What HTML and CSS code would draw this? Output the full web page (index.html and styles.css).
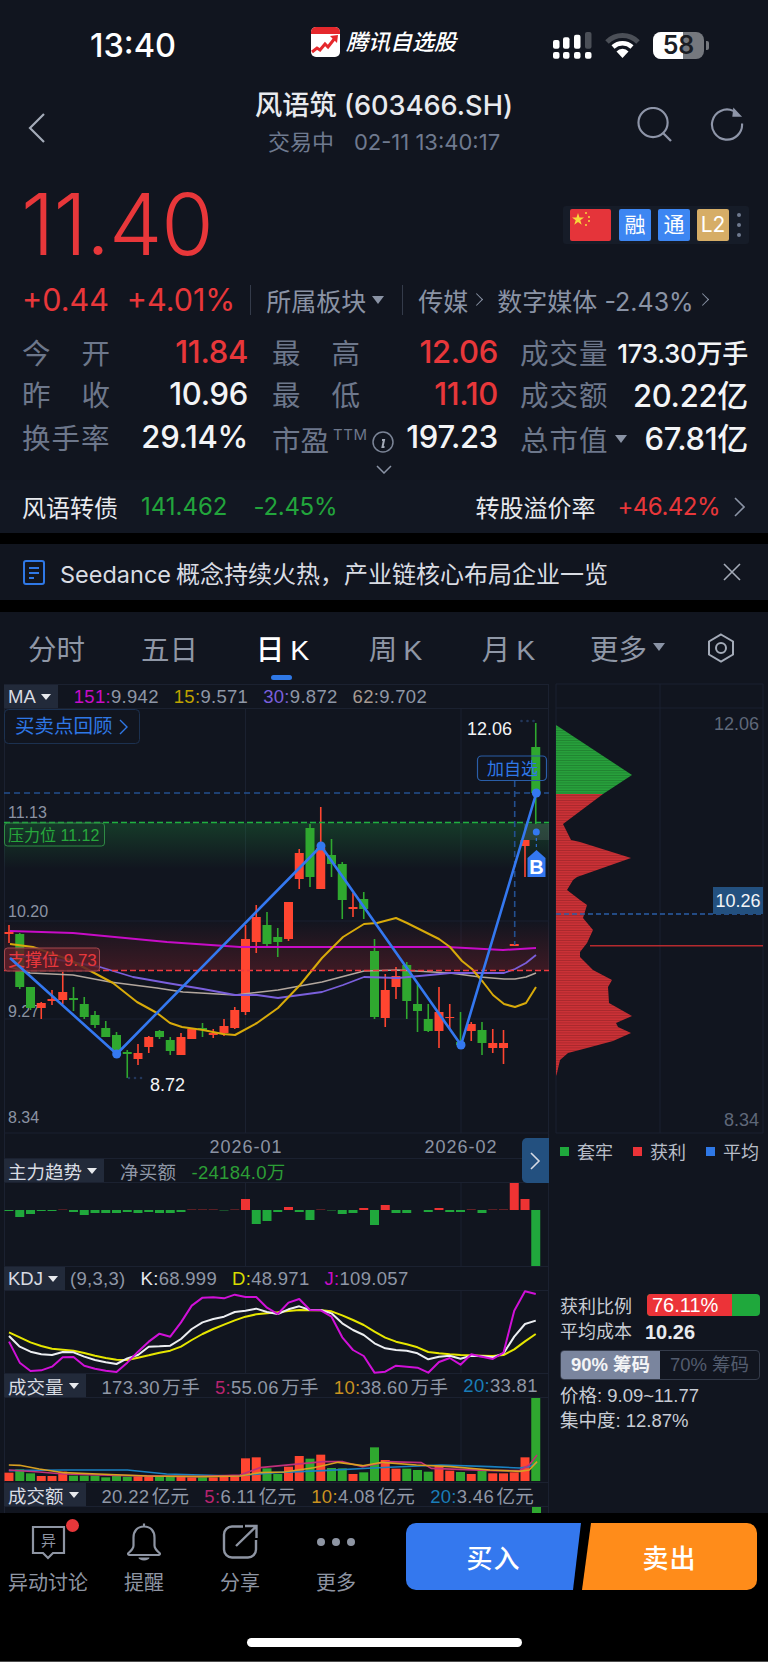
FILE: index.html
```html
<!DOCTYPE html>
<html lang="zh-CN">
<head>
    <meta charset="UTF-8">
    <meta name="viewport" content="width=device-width, initial-scale=1.0">
    <title>风语筑 (603466.SH)</title>
    <link rel="stylesheet" href="styles.css">
</head>
<body>
    <div class="top">
        <div class="statusbar">
            <span class="clock">13:40</span>
            <div class="app-name">
                <svg class="app-icon" viewBox="0 0 29 30">
                    <rect width="29" height="30" rx="5" fill="#fff"/>
                    <path d="M0 7V5a5 5 0 0 1 5-5h19a5 5 0 0 1 5 5v2z" fill="#e5282c"/>
                    <path d="M1 25l5-4 3 2 5-6 3 3 7-9" fill="none" stroke="#e5282c" stroke-width="3"/>
                    <path d="M19 9l8-1-1 8z" fill="#e5282c"/>
                </svg>
                <span class="app-title">腾讯自选股</span>
            </div>
            <div class="status-icons">
                <svg class="signal" viewBox="0 0 40 27">
                    <g fill="#fff">
                        <rect x="0" y="8" width="6.5" height="8.700" rx="2"/>
                        <rect x="10" y="5.300" width="6.500" height="11.400" rx="2"/>
                        <rect x="21" y="2.700" width="6.500" height="14" rx="2"/>
                        <rect x="32" y="0" width="6.500" height="16.700" rx="2" fill="#4b4f57"/>
                        <rect x="0" y="20" width="6.500" height="6.700" rx="2"/>
                        <rect x="10" y="20" width="6.500" height="6.700" rx="2"/>
                        <rect x="21" y="20" width="6.500" height="6.700" rx="2"/>
                        <rect x="32" y="20" width="6.500" height="6.700" rx="2"/>
                    </g>
                </svg>
                <svg class="wifi" viewBox="0 0 35 26">
                    <path d="M2 10a22 22 0 0 1 31 0" fill="none" stroke="#4b4f57" stroke-width="5"/>
                    <path d="M8 15a14 14 0 0 1 19 0" fill="none" stroke="#fff" stroke-width="4.5"/>
                    <path d="M17.500 26l-6-6.500a8 8 0 0 1 12 0z" fill="#fff"/>
                </svg>
                <div class="battery">
                    <div class="battery-body"><div class="battery-fill"></div><span>58</span></div>
                    <div class="battery-tip"></div>
                </div>
            </div>
        </div>

        <div class="nav">
            <svg class="back" viewBox="0 0 18 30"><path d="M16 1L2 15l14 14" fill="none" stroke="#a4abb8" stroke-width="2.200"/></svg>
            <div class="nav-title">
                <h1>风语筑 (603466.SH)</h1>
                <p><span>交易中</span>02-11 13:40:17</p>
            </div>
            <div class="nav-icons">
                <svg class="nav-icon" viewBox="0 0 36 36">
                    <circle cx="16.500" cy="16" r="15" fill="none" stroke="#8e95a8" stroke-width="2.200"/>
                    <path d="M27 27l8 8" fill="none" stroke="#8e95a8" stroke-width="2.400"/>
                </svg>
                <svg class="nav-icon" viewBox="0 0 36 36">
                    <path d="M25 4a15.500 15.500 0 1 0 9 13" fill="none" stroke="#8e95a8" stroke-width="2.200"/>
                    <path d="M25 .5l9 9.500h-10z" fill="#8e95a8"/>
                </svg>
            </div>
        </div>

        <div class="price-row">
            <div class="price">11.40</div>
            <div class="badges">
                <svg class="flag" viewBox="0 0 41 32">
                    <rect width="41" height="32" rx="2" fill="#e5343a"/>
                    <path d="M8 4l1.500 4.500h4.500l-3.700 2.700 1.400 4.500L8 13l-3.700 2.700 1.400-4.500L2 8.500h4.500z" fill="#f7d83a"/>
                    <circle cx="16" cy="4" r="1" fill="#f7d83a"/>
                    <circle cx="19" cy="8" r="1" fill="#f7d83a"/>
                    <circle cx="19" cy="12" r="1" fill="#f7d83a"/>
                    <circle cx="16" cy="16" r="1" fill="#f7d83a"/>
                </svg>
                <span class="badge badge-blue">融</span>
                <span class="badge badge-blue">通</span>
                <span class="badge badge-gold">L2</span>
                <span class="badge-more"><i></i><i></i><i></i></span>
            </div>
        </div>

        <div class="change-row">
            <span class="change first">+0.44</span>
            <span class="change second">+4.01%</span>
            <span class="sep"></span>
            <span class="sector sector-menu">所属板块<i class="tri"></i></span>
            <span class="sep"></span>
            <span class="sector">传媒<i class="chev"></i></span>
            <span class="sector">数字媒体 -2.43%<i class="chev"></i></span>
        </div>

        <div class="stats">
            <div class="stat"><span class="lbl spread"><i>今</i><i>开</i></span><b class="up">11.84</b></div>
            <div class="stat"><span class="lbl spread"><i>最</i><i>高</i></span><b class="up">12.06</b></div>
            <div class="stat"><span class="lbl">成交量</span><b class="small">173.30万手</b></div>

            <div class="stat"><span class="lbl spread"><i>昨</i><i>收</i></span><b>10.96</b></div>
            <div class="stat"><span class="lbl spread"><i>最</i><i>低</i></span><b class="up">11.10</b></div>
            <div class="stat"><span class="lbl">成交额</span><b>20.22亿</b></div>

            <div class="stat"><span class="lbl">换手率</span><b>29.14%</b></div>
            <div class="stat">
                <span class="lbl lower pe">市盈<sup>TTM</sup></span>
                <svg class="info" viewBox="0 0 22 22">
                    <circle cx="11" cy="11" r="10" fill="none" stroke="#7b8496" stroke-width="1.500"/>
                    <path d="M11.500 5.500h.01M10 9h2l-1.500 7h2" fill="none" stroke="#a4abb8" stroke-width="2"/>
                </svg>
                <b>197.23</b>
            </div>
            <div class="stat"><span class="lbl lower">总市值</span><i class="tri tri-cap"></i><b>67.81亿</b></div>
        </div>
        <svg class="expand" viewBox="0 0 16 9"><path d="M1 1l7 7 7-7" fill="none" stroke="#8a93a5" stroke-width="1.500"/></svg>

        <div class="bond">
            <span class="bond-name">风语转债</span>
            <span class="down bond-price">141.462</span>
            <span class="down bond-pct">-2.45%</span>
            <span class="bond-label">转股溢价率</span>
            <span class="up bond-rate">+46.42%</span>
            <svg class="bond-chev" viewBox="0 0 11 20"><path d="M1 1l9 9-9 9" fill="none" stroke="#8a93a5" stroke-width="1.600"/></svg>
        </div>
    </div>

    <div class="banner">
        <svg class="banner-icon" viewBox="0 0 22 25">
            <rect x="1" y="1" width="20" height="23" rx="2" fill="none" stroke="#2f78e6" stroke-width="2"/>
            <path d="M6 8h10M6 13h10M6 18h5" fill="none" stroke="#2f78e6" stroke-width="2"/>
        </svg>
        <span class="banner-text"><span class="banner-latin">Seedance</span>概念持续火热，产业链核心布局企业一览</span>
        <svg class="banner-close" viewBox="0 0 18 18"><path d="M1 1l16 16M17 1L1 17" fill="none" stroke="#a4abb8" stroke-width="1.600"/></svg>
    </div>

    <div class="tabs">
        <span class="tab">分时</span>
        <span class="tab">五日</span>
        <span class="tab active">日<em>K</em></span>
        <span class="tab">周<em>K</em></span>
        <span class="tab">月<em>K</em></span>
        <span class="tab more">更多<i class="tri tri-tab"></i></span>
        <svg class="tab-gear" viewBox="0 0 28 30">
            <path d="M14 1.500l12 7v13l-12 7-12-7v-13z" fill="none" stroke="#a4abb8" stroke-width="2"/>
            <circle cx="14" cy="15" r="5" fill="none" stroke="#a4abb8" stroke-width="2"/>
        </svg>
    </div>

    <div class="chart">
        <div class="chart-left">
            <div class="ind-row">
                <span class="ind-btn">MA<i class="tri tri-btn"></i></span>
                <span><u class="c-mag">151:</u>9.942</span>
                <span><u class="c-gold">15:</u>9.571</span>
                <span><u class="c-pur">30:</u>9.872</span>
                <span><u class="c-tan">62:</u>9.702</span>
            </div>
            <svg id="main-plot" class="plot plot-main" viewBox="4 709 545 449"></svg>
            <button class="collapse"><svg viewBox="0 0 11 18"><path d="M1 1l8 8-8 8" fill="none" stroke="#d5dae4" stroke-width="1.600"/></svg></button>

            <div class="ind-row">
                <span class="ind-btn">主力趋势<i class="tri tri-btn"></i></span>
                <span>净买额</span>
                <span class="c-green">-24184.0万</span>
            </div>
            <svg id="flow-plot" class="plot plot-flow" viewBox="4 1183 545 83"></svg>

            <div class="ind-row">
                <span class="ind-btn">KDJ<i class="tri tri-btn"></i></span>
                <span class="kdj-params">(9,3,3)</span>
                <span><u class="c-white">K:</u>68.999</span>
                <span><u class="c-lime">D:</u>48.971</span>
                <span><u class="c-mag">J:</u>109.057</span>
            </div>
            <svg id="kdj-plot" class="plot plot-kdj" viewBox="4 1291 545 82"></svg>

            <div class="ind-row">
                <span class="ind-btn">成交量<i class="tri tri-btn"></i></span>
                <span>173.30 万手</span>
                <span><u class="c-rose">5:</u>55.06 万手</span>
                <span><u class="c-amber">10:</u>38.60 万手</span>
                <span><u class="c-sky">20:</u>33.81</span>
            </div>
            <svg id="vol-plot" class="plot plot-vol" viewBox="4 1398 545 84"></svg>

            <div class="ind-row">
                <span class="ind-btn">成交额<i class="tri tri-btn"></i></span>
                <span>20.22 亿元</span>
                <span><u class="c-rose">5:</u>6.11 亿元</span>
                <span><u class="c-amber">10:</u>4.08 亿元</span>
                <span><u class="c-sky">20:</u>3.46 亿元</span>
            </div>
            <div class="amt-plot"><div class="amt-bar"></div></div>
        </div>

        <div class="chart-right">
            <svg id="chip-plot" class="plot plot-chip" viewBox="556 684 212 449"></svg>
            <div class="legend">
                <span><i class="sq sq-green"></i>套牢</span>
                <span><i class="sq sq-red"></i>获利</span>
                <span><i class="sq sq-blue"></i>平均</span>
            </div>
            <div class="ratio">
                <span>获利比例</span>
                <div class="ratio-bar"><div class="ratio-fill">76.11%</div></div>
            </div>
            <div class="avg-cost"><span>平均成本</span><b>10.26</b></div>
            <div class="seg">
                <span class="seg-item on">90% 筹码</span>
                <span class="seg-item">70% 筹码</span>
            </div>
            <p class="chip-line">价格: 9.09~11.77</p>
            <p class="chip-line">集中度: 12.87%</p>
        </div>
    </div>

    <div class="bottom">
        <div class="tools">
            <div class="tool">
                <div class="tool-icon">
                    <svg viewBox="0 0 36 36">
                        <path d="M3 4h31v26H23l-5 5-5-5H3z" fill="none" stroke="#8e95a3" stroke-width="2.200"/>
                        <text class="tool-glyph" x="18.500" y="23" text-anchor="middle">异</text>
                    </svg>
                    <span class="dot"></span>
                </div>
                <span>异动讨论</span>
            </div>
            <div class="tool">
                <div class="tool-icon">
                    <svg viewBox="0 0 36 36">
                        <path d="M18 .5v3M18 3.500c-7 0-10.500 5-10.500 11v8c0 3-2 5-5 7.500-1 1 0 2 1 2h29c1 0 2-1 1-2-3-2.500-5-4.500-5-7.500v-8c0-6-3.500-11-10.500-11z" fill="none" stroke="#8e95a3" stroke-width="2.200"/>
                        <path d="M12.500 34.500h11a5.500 3 0 0 1-11 0z" fill="#8e95a3"/>
                    </svg>
                </div>
                <span>提醒</span>
            </div>
            <div class="tool">
                <div class="tool-icon">
                    <svg viewBox="0 0 36 36">
                        <path d="M21 3.500H10a8 8 0 0 0-8 8v15a8 8 0 0 0 8 8h16a8 8 0 0 0 8-8V17" fill="none" stroke="#8e95a3" stroke-width="2.400"/>
                        <path d="M14 23L34 3.500M23 3h11.500v12" fill="none" stroke="#8e95a3" stroke-width="2.400"/>
                    </svg>
                </div>
                <span>分享</span>
            </div>
            <div class="tool">
                <div class="tool-icon dots"><i></i><i></i><i></i></div>
                <span>更多</span>
            </div>
        </div>
        <div class="trade">
            <button class="trade-btn buy">买入</button>
            <button class="trade-btn sell">卖出</button>
        </div>
        <div class="home-bar"></div>
    </div>

    <script src="chart.js"></script>
</body>
</html>
```

FILE: styles.css
```css
* {
    margin: 0;
    padding: 0;
    box-sizing: border-box;
}

body {
    width: 768px;
    height: 1662px;
    overflow: hidden;
    background: #000;
    color: #e8eaee;
    font-family: Inter, "Noto Sans CJK SC", sans-serif;
}

i, em, u {
    font-style: normal;
    text-decoration: none;
}

.up { color: #e8373a; }
.down { color: #22a53c; }

/* triangles and chevrons shared by the rows */
.tri {
    display: inline-block;
    width: 0;
    height: 0;
    border-left: 6px solid transparent;
    border-right: 6px solid transparent;
    border-top: 8px solid #8a93a5;
}

.chev {
    display: inline-block;
    width: 9px;
    height: 9px;
    margin-left: 7px;
    border-top: 1.5px solid #8a93a5;
    border-right: 1.5px solid #8a93a5;
    transform: rotate(45deg) translate(-2px, 2px);
}

/* top section */
.top {
    height: 533px;
    background: #11151f;
    position: relative;
}

.statusbar {
    height: 88px;
    display: grid;
    grid-template-columns: 311px 242px 1fr;
    padding-top: 27px;
}

.clock {
    padding-left: 90px;
    font-size: 32.500px;
    font-weight: 500;
    line-height: 38px;
    color: #fff;
}

.app-name {
    display: flex;
    align-items: flex-start;
    gap: 6px;
}

.app-icon {
    width: 29px;
    height: 30px;
}

.app-title {
    font-size: 22px;
    font-weight: 500;
    font-style: italic;
    line-height: 30px;
    color: #fff;
}

.status-icons {
    display: flex;
    align-items: flex-start;
    padding-top: 5px;
    gap: 12px;
}

.signal {
    width: 40px;
    height: 27px;
}

.wifi {
    width: 35px;
    height: 26px;
}

.battery {
    display: flex;
    align-items: center;
    gap: 2px;
    margin-left: 1px;
}

.battery-body {
    width: 51px;
    height: 27px;
    border-radius: 8px;
    background: #75787e;
    position: relative;
    overflow: hidden;
    text-align: center;
    font-size: 25px;
    font-weight: 600;
    line-height: 27px;
    color: #1a1d24;
}

.battery-fill {
    position: absolute;
    left: 0;
    top: 0;
    bottom: 0;
    width: 30px;
    background: #fff;
}

.battery-body span {
    position: relative;
}

.battery-tip {
    width: 3px;
    height: 9px;
    border-radius: 0 2px 2px 0;
    background: #75787e;
}

.nav {
    height: 77px;
    display: grid;
    grid-template-columns: 1fr auto 1fr;
    align-items: start;
}

.back {
    width: 18px;
    height: 30px;
    margin: 25px 0 0 28px;
}

.nav-title {
    text-align: center;
}

.nav-title h1 {
    font-size: 27.200px;
    font-weight: 500;
    line-height: 36px;
    white-space: nowrap;
}

.nav-title p {
    font-size: 22px;
    line-height: 36px;
    color: #6f7a8f;
}

.nav-title p span {
    margin-right: 20px;
}

.nav-icons {
    display: flex;
    justify-content: flex-end;
    gap: 37px;
    padding: 19px 24px 0 0;
}

.nav-icon {
    width: 35px;
    height: 35px;
}

.price-row {
    height: 111px;
    padding: 0 19px 0 21px;
    display: flex;
    justify-content: space-between;
    align-items: flex-start;
}

.price {
    padding-top: 10px;
    font-size: 85px;
    font-weight: 300;
    line-height: 100px;
    letter-spacing: -1px;
    color: #e8373a;
}

.badges {
    display: flex;
    align-items: center;
    gap: 7px;
    margin-top: 41px;
    padding: 3px 8px 3px 7px;
    background: #161c28;
    border-radius: 3px;
}

.flag {
    width: 41px;
    height: 32px;
    margin-right: 1px;
}

.badge {
    width: 32px;
    height: 32px;
    border-radius: 2px;
    text-align: center;
    font-size: 21px;
    line-height: 32px;
    color: #fff;
}

.badge-blue { background: #3d86f2; }
.badge-gold { background: #d6ad66; }

.badge-more {
    display: flex;
    flex-direction: column;
    gap: 6px;
    margin-left: 1px;
}

.badge-more i {
    width: 4px;
    height: 4px;
    border-radius: 50%;
    background: #6f7a8f;
}

.change-row {
    height: 47px;
    margin-bottom: 7px;
    padding-left: 22px;
    display: flex;
    align-items: center;
    font-size: 25px;
    color: #8a93a5;
}

.change {
    font-size: 30.500px;
    font-weight: 400;
    color: #e8373a;
}

.second {
    margin-left: 18px;
}

.sep {
    width: 1px;
    height: 30px;
    background: #343b4a;
    margin: 0 15px;
}

.sector {
    display: flex;
    align-items: center;
    margin-right: 13px;
}

.sector-menu {
    margin-right: 3px;
}

.sector .tri {
    margin-left: 6px;
}

.stats {
    margin-top: 0;
    padding-left: 22px;
    display: grid;
    grid-template-columns: 226px 226px 226px;
    column-gap: 24px;
    grid-auto-rows: 42.500px;
}

.stat:nth-child(3n) {
    margin-left: -2px;
}

.stat {
    display: flex;
    align-items: center;
}

.stat b {
    margin-left: auto;
    font-size: 31px;
    font-weight: 500;
    letter-spacing: -0.300px;
    color: #f3f4f6;
}

.stat b.up { color: #e8373a; }
.stat b.small { font-size: 26px; }

.lbl {
    width: 89px;
    font-size: 28.500px;
    letter-spacing: 1px;
    white-space: nowrap;
    color: #6d778b;
}

.spread {
    display: flex;
    justify-content: space-between;
}

.lower {
    padding-top: 5px;
}

.pe {
    width: 100px;
    letter-spacing: 0;
}

.pe sup {
    margin-left: 4px;
    font-size: 15px;
    letter-spacing: 0.500px;
    vertical-align: 11px;
    line-height: 0;
}

.info {
    width: 22px;
    height: 22px;
    margin-top: 11px;
}

.tri-cap {
    margin: 6px 0 0 6px;
}

.expand {
    position: absolute;
    left: 376px;
    top: 465px;
    width: 16px;
    height: 9px;
}

.bond {
    position: absolute;
    left: 0;
    right: 0;
    bottom: 0;
    height: 53px;
    padding: 0 23px 0 22px;
    display: flex;
    align-items: center;
    background: #121722;
    font-size: 24px;
}

.bond-price { margin-left: 23px; }
.bond-pct { margin-left: 26px; letter-spacing: -0.300px; }
.bond-label { margin-left: auto; }
.bond-rate { margin-left: 22px; letter-spacing: -0.500px; }

.bond-chev {
    width: 11px;
    height: 20px;
    margin-left: 14px;
}

.banner {
    height: 56px;
    margin-top: 11px;
    padding: 0 27px 0 23px;
    display: flex;
    align-items: center;
    background: #11151f;
    font-size: 24px;
    color: #d9dce3;
}

.banner-icon {
    width: 22px;
    height: 25px;
}

.banner-text {
    margin-left: 15px;
}

.banner-latin {
    margin-right: 5px;
    font-size: 23.500px;
}

.banner-close {
    width: 18px;
    height: 18px;
    margin-left: auto;
}

/* period tabs */
.tabs {
    height: 72px;
    margin-top: 12px;
    display: grid;
    grid-template-columns: repeat(5, 113px) 136px 1fr;
    align-items: center;
    background: #11151f;
    font-size: 28.500px;
    color: #8f97a6;
}

.tab {
    text-align: center;
    padding-bottom: 2px;
    position: relative;
}

.tab em {
    margin-left: 6px;
    font-family: "Liberation Sans", sans-serif;
}

.tab.active {
    font-weight: 500;
    color: #fff;
}

.tab.active::after {
    content: "";
    position: absolute;
    left: 45px;
    bottom: -10px;
    width: 21px;
    height: 5px;
    border-radius: 3px;
    background: #2f78e6;
}

.more {
    display: flex;
    align-items: center;
    justify-content: flex-start;
    padding-left: 25px;
}

.tri-tab {
    margin-left: 6px;
}

.tab-gear {
    width: 28px;
    height: 30px;
    margin-left: 6px;
}

/* chart area: left column holds the k-line and indicators, right the chips */
.chart {
    height: 829px;
    display: flex;
    background: #11151f;
    font-family: "Liberation Sans", "Noto Sans CJK SC", sans-serif;
}

.chart-left {
    position: relative;
    width: 545px;
    margin-left: 4px;
    box-shadow: inset 1px 0 #1b2130, inset -1px 0 #1b2130;
}

.chart-right {
    width: 212px;
    margin-left: 7px;
}

.plot {
    display: block;
    overflow: visible;
}

.plot-main { width: 545px; height: 449px; }
.plot-flow { width: 545px; height: 83px; }
.plot-kdj { width: 545px; height: 82px; }
.plot-vol { width: 545px; height: 84px; }
.plot-chip { width: 212px; height: 449px; }

.ind-row {
    height: 25px;
    display: flex;
    align-items: center;
    gap: 15px;
    border-top: 1px solid #1b2130;
    border-bottom: 1px solid #1b2130;
    font-size: 18.500px;
    letter-spacing: 0.300px;
    word-spacing: -3px;
    white-space: nowrap;
    color: #8f97a6;
}

.ind-btn {
    height: 100%;
    padding-left: 4px;
    padding-right: 7px;
    margin-right: 1px;
    display: flex;
    align-items: center;
    gap: 5px;
    background: #222a3a;
    font-size: 18.500px;
    letter-spacing: 0;
    color: #d9dce3;
}

.tri-btn {
    border-left-width: 5px;
    border-right-width: 5px;
    border-top: 6px solid #e8eaee;
}

.kdj-params { margin-left: -11px; }

.c-mag { color: #c70cc7; }
.c-gold { color: #bfa200; }
.c-pur { color: #7a5fdc; }
.c-tan { color: #a89a90; }
.c-white { color: #e8eaee; }
.c-lime { color: #d8dc00; }
.c-green { color: #2c9e36; }
.c-rose { color: #b8246f; }
.c-amber { color: #c9921f; }
.c-sky { color: #1a7db8; }

.collapse {
    position: absolute;
    left: 518px;
    top: 454px;
    width: 27px;
    height: 45px;
    border: 0;
    border-radius: 5px 0 0 5px;
    background: #23507f;
}

.collapse svg {
    width: 11px;
    height: 18px;
    display: block;
    margin: 0 auto;
}

.amt-plot {
    height: 7px;
    position: relative;
}

.amt-bar {
    position: absolute;
    left: 527.500px;
    top: 0;
    bottom: 0;
    width: 9px;
    background: #2fa82f;
}

.legend {
    padding: 5px 0 0 4px;
    display: flex;
    gap: 20px;
    font-size: 18px;
    color: #b8bdc8;
}

.legend span {
    display: flex;
    align-items: center;
    gap: 8px;
}

.sq {
    width: 9px;
    height: 9px;
}

.sq-green { background: #1fa83c; }
.sq-red { background: #ec3338; }
.sq-blue { background: #2f78e6; }

.ratio {
    margin: 128px 0 0 4px;
    display: flex;
    align-items: center;
    gap: 15px;
    font-size: 18px;
    color: #c8ccd4;
}

.ratio-bar {
    width: 113px;
    height: 22px;
    border-radius: 4px;
    overflow: hidden;
    background: #1fa83c;
}

.ratio-fill {
    width: 85px;
    height: 100%;
    padding-left: 5px;
    background: #ec3338;
    font-size: 20px;
    line-height: 22px;
    color: #fff;
}

.avg-cost {
    margin: 2px 0 0 4px;
    display: flex;
    align-items: center;
    gap: 13px;
    font-size: 18px;
    line-height: 25px;
    color: #c8ccd4;
}

.avg-cost b {
    font-size: 20px;
    color: #e8eaee;
}

.seg {
    width: 200px;
    height: 30px;
    margin: 5px 0 0 4px;
    display: flex;
    border: 1px solid #343b4a;
    border-radius: 4px;
    overflow: hidden;
    font-size: 18.500px;
    line-height: 28px;
    color: #535c6e;
    text-align: center;
}

.seg-item {
    flex: 1;
}

.seg-item.on {
    background: #7a859e;
    font-weight: 700;
    color: #f3f4f6;
}

.chip-line {
    margin: 5px 0 0 4px;
    font-size: 18.500px;
    line-height: 21px;
    color: #c8ccd4;
}

.chip-line + .chip-line {
    margin-top: 4px;
}

/* bottom toolbar */
.bottom {
    height: 149px;
    position: relative;
    display: flex;
    align-items: flex-start;
    padding-top: 10px;
    background: #000;
    border-bottom: 1px solid #4b4b4b;
}

.tools {
    display: flex;
}

.tool {
    width: 96px;
    display: flex;
    flex-direction: column;
    align-items: center;
    font-size: 20px;
    color: #8e95a3;
}

.tool-icon {
    position: relative;
    width: 36px;
    height: 36px;
    margin-bottom: 8px;
}

.tool-icon svg {
    width: 36px;
    height: 36px;
    display: block;
    overflow: visible;
}

.tool-glyph {
    font-size: 15px;
    fill: #8e95a3;
}

.dot {
    position: absolute;
    right: -12.500px;
    top: -4.500px;
    width: 13px;
    height: 13px;
    border-radius: 50%;
    background: #e8373a;
}

.dots {
    display: flex;
    align-items: center;
    justify-content: center;
    gap: 7px;
    padding-top: 2px;
}

.dots i {
    flex: none;
    width: 8px;
    height: 8px;
    border-radius: 50%;
    background: #8e95a3;
}

.trade {
    display: flex;
    gap: 1px;
    margin-left: 22px;
}

.trade-btn {
    width: 175px;
    height: 67px;
    border: 0;
    font-family: inherit;
    font-size: 26px;
    font-weight: 500;
    letter-spacing: 1px;
    color: #fff;
}

.buy {
    background: #3478ee;
    border-radius: 10px 0 0 10px;
    clip-path: polygon(0 0, 100% 0, calc(100% - 8px) 100%, 0 100%);
}

.sell {
    background: #ff8c1a;
    border-radius: 0 10px 10px 0;
    clip-path: polygon(9px 0, 100% 0, 100% 100%, 0 100%);
}

.home-bar {
    position: absolute;
    left: 247px;
    bottom: 14px;
    width: 275px;
    height: 9px;
    border-radius: 5px;
    background: #fff;
}
```

FILE: chart.js
```js
// page coordinates go straight into the svg viewBoxes, so data below is in px
const SVG_NS = 'http://www.w3.org/2000/svg';
const RED = '#ff4530';
const GREEN = '#2fa82f';
const BLUE = '#3478f0';
const GRID = '#1b2130';

const barX = i => 9 + 10.75 * i;

function add(parent, tag, attrs, text) {
    const node = document.createElementNS(SVG_NS, tag);
    for (const key in attrs) node.setAttribute(key, attrs[key]);
    if (text) node.textContent = text;
    parent.appendChild(node);
    return node;
}

function line(parent, x1, y1, x2, y2, color, extra) {
    return add(parent, 'line', Object.assign({ x1, y1, x2, y2, stroke: color }, extra));
}

function polyline(parent, points, color, width) {
    return add(parent, 'polyline', {
        points: points.map(p => p.join(',')).join(' '),
        fill: 'none',
        stroke: color,
        'stroke-width': width,
        'stroke-linejoin': 'round'
    });
}

function label(parent, x, y, text, size, color, anchor, weight, spacing) {
    return add(parent, 'text', {
        x, y,
        fill: color,
        'font-size': size,
        'text-anchor': anchor || 'start',
        'font-weight': weight || 400,
        'letter-spacing': spacing || 0
    }, text);
}

function gradient(defs, id, stops) {
    const grad = add(defs, 'linearGradient', { id, x1: 0, y1: 0, x2: 0, y2: 1 });
    stops.forEach(s => add(grad, 'stop', { offset: s[0], 'stop-color': s[1], 'stop-opacity': s[2] }));
}

// [color, body top, body bottom, wick top, wick bottom]
const candles = [
    ['r', 932, 934, 925, 943], ['g', 934, 987, 933, 989], ['g', 987, 1008, 987, 1010],
    ['r', 1003, 1008, 1002, 1019], ['r', 999, 1001, 990, 1005], ['r', 992, 1000, 972, 1004],
    ['g', 998, 1000, 987, 1011], ['g', 1004, 1017, 997, 1019], ['g', 1015, 1025, 1011, 1028],
    ['g', 1028, 1037, 1021, 1037], ['g', 1035, 1052, 1032, 1053], ['g', 1052, 1054, 1050, 1078],
    ['r', 1053, 1059, 1044, 1065], ['r', 1037, 1047, 1036, 1053], ['g', 1031, 1037, 1030, 1039],
    ['g', 1040, 1051, 1037, 1055], ['r', 1037, 1055, 1033, 1055], ['r', 1029, 1039, 1028, 1039],
    ['g', 1028, 1030, 1023, 1037], ['r', 1033, 1035, 1029, 1038], ['r', 1026, 1033, 1019, 1036],
    ['r', 1010, 1028, 1007, 1029], ['r', 939, 1012, 925, 1015], ['r', 917, 942, 905, 953],
    ['g', 925, 944, 912, 946], ['g', 937, 942, 928, 957], ['r', 902, 939, 902, 941],
    ['r', 853, 879, 849, 889], ['g', 828, 877, 824, 887], ['r', 848, 889, 807, 889],
    ['g', 855, 864, 839, 877], ['g', 864, 900, 862, 919], ['r', 907, 909, 893, 917],
    ['g', 899, 909, 892, 919], ['g', 951, 1017, 939, 1019], ['r', 990, 1018, 974, 1027],
    ['r', 976, 987, 967, 999], ['g', 965, 1001, 962, 1019], ['g', 1004, 1011, 983, 1032],
    ['g', 1019, 1031, 1004, 1032], ['r', 1012, 1031, 987, 1048], ['r', 1017, 1018, 1004, 1030],
    ['g', 1042, 1045, 1012, 1045], ['r', 1024, 1031, 1022, 1041], ['g', 1030, 1043, 1022, 1055],
    ['r', 1043, 1048, 1029, 1053], ['r', 1043, 1048, 1030, 1064], ['r', 944, 946, 944, 946],
    ['r', 840, 846, 840, 877], ['g', 747, 793, 723, 824]
];

function drawMain() {
    const svg = document.getElementById('main-plot');
    const defs = add(svg, 'defs', {});
    gradient(defs, 'press-band', [[0, '#23aa46', 0.25], [1, '#23aa46', 0]]);
    gradient(defs, 'support-band', [[0, '#c82832', 0], [1, '#c82832', 0.24]]);

    // grid
    [822, 921, 1019].forEach(y => line(svg, 4, y, 549, y, GRID));
    [245.5, 461].forEach(x => line(svg, x, 709, x, 1133, GRID));
    line(svg, 4, 1133, 549, 1133, GRID);

    add(svg, 'rect', { x: 4, y: 823, width: 545, height: 46, fill: 'url(#press-band)' });
    add(svg, 'rect', { x: 4, y: 920, width: 545, height: 50, fill: 'url(#support-band)' });

    ['11.13', '10.20', '9.27', '8.34'].forEach((text, n) => {
        label(svg, 8, [818, 917, 1016.5, 1123][n], text, 16, '#8b93a3');
    });
    label(svg, 246, 1153, '2026-01', 18, '#8b93a3', 'middle', 400, 1);
    label(svg, 461, 1153, '2026-02', 18, '#8b93a3', 'middle', 400, 1);

    // candles
    candles.forEach((c, i) => {
        const x = barX(i);
        const color = c[0] === 'r' ? RED : GREEN;
        line(svg, x, c[3], x, c[4], color, { 'stroke-width': 1.6 });
        add(svg, 'rect', { x: x - 4.5, y: c[1], width: 9, height: c[2] - c[1], fill: color });
    });

    // moving averages
    polyline(svg, [[10, 931], [73, 933], [167, 942], [240, 947], [400, 947], [447, 947], [503, 950], [536, 948]], '#c70cc7', 2);
    polyline(svg, [[10, 967], [30, 973], [73, 975], [110, 982], [157, 988], [183, 992], [235, 995], [278, 990], [322, 982], [364, 971], [398, 970], [450, 973], [480, 977], [504, 979], [515, 979], [526, 977], [536, 973]], '#b3a79e', 1.6);
    polyline(svg, [[10, 955], [60, 960], [100, 967], [133, 977], [167, 983], [203, 989], [235, 995], [257, 995], [278, 998], [300, 995], [322, 992], [343, 985], [364, 977], [398, 978], [430, 975], [450, 973], [504, 973], [515, 969], [526, 963], [536, 955]], '#7a5fdc', 1.8);
    polyline(svg, [[10, 944], [33, 947], [70, 960], [113, 983], [137, 1002], [157, 1013], [170, 1023], [182, 1027], [203, 1030], [223, 1034], [235, 1035], [257, 1023], [278, 1008], [300, 985], [322, 958], [343, 937], [364, 924], [377, 923], [396, 918], [407, 923], [429, 934], [439, 939], [450, 947], [462, 961], [472, 969], [483, 982], [493, 995], [504, 1004], [515, 1007], [526, 1003], [536, 987]], '#d8aa0a', 2);

    // pressure and support lines
    line(svg, 4, 822.5, 549, 822.5, '#20b040', { 'stroke-width': 1.6, 'stroke-dasharray': '6 3' });
    line(svg, 4, 970.5, 549, 970.5, '#f03a3e', { 'stroke-width': 1.6, 'stroke-dasharray': '6 3' });
    line(svg, 4, 793, 549, 793, '#234f8f', { 'stroke-width': 1.6, 'stroke-dasharray': '6 4' });
    line(svg, 514.7, 781, 514.7, 945, '#234f8f', { 'stroke-width': 1.6, 'stroke-dasharray': '6 4' });

    add(svg, 'rect', { x: 4.5, y: 823, width: 100, height: 23, rx: 3, fill: 'none', stroke: '#2e8a44' });
    label(svg, 8, 840.5, '压力位 11.12', 16, '#27a83c');
    add(svg, 'rect', { x: 4.5, y: 948, width: 95, height: 23, rx: 3, fill: '#5a1f28', 'fill-opacity': 0.85, stroke: '#a5484e' });
    label(svg, 8, 966, '支撑位 9.73', 17, '#e8383c');

    add(svg, 'rect', { x: 4.5, y: 709.5, width: 135, height: 34, rx: 4, fill: 'none', stroke: '#1c3150' });
    label(svg, 15, 733, '买卖点回顾', 19.5, '#2f78e6');
    add(svg, 'path', { d: 'M120 720l7 7-7 7', fill: 'none', stroke: '#2f78e6', 'stroke-width': 1.4 });

    add(svg, 'rect', { x: 477.5, y: 756, width: 69, height: 24.5, rx: 4, fill: 'none', stroke: '#2a5ea8', 'stroke-width': 1.2 });
    label(svg, 487, 775, '加自选', 17, '#2f78e6');

    // high / low markers
    label(svg, 467, 735, '12.06', 18, '#f3f4f6');
    label(svg, 150, 1091, '8.72', 18, '#f3f4f6');
    [522, 528, 534].forEach(x => add(svg, 'circle', { cx: x - 0.5, cy: 721, r: 1.3, fill: '#23375c' }));
    [129, 135, 141].forEach(x => add(svg, 'circle', { cx: x, cy: 1078, r: 1.3, fill: '#23375c' }));

    // buy marker
    add(svg, 'rect', { x: 524, y: 824, width: 25, height: 16, fill: '#fff', 'fill-opacity': 0.1 });
    line(svg, 536.3, 832, 536.3, 850, BLUE, { 'stroke-dasharray': '3 3' });
    add(svg, 'circle', { cx: 536.3, cy: 832, r: 3.5, fill: BLUE });
    add(svg, 'path', { d: 'M527.5 858l9-8 9 8v19h-18z', fill: BLUE });
    label(svg, 536.5, 873.5, 'B', 20, '#fff', 'middle', 700);

    // trend zigzag
    const pivots = [[10, 958], [116.7, 1054], [321, 846], [461, 1045], [536.3, 793]];
    polyline(svg, pivots, BLUE, 2.6);
    pivots.slice(1).forEach(p => add(svg, 'circle', { cx: p[0], cy: p[1], r: 4.5, fill: BLUE }));
}

function drawFlow() {
    const svg = document.getElementById('flow-plot');
    const base = 1210;
    // signed height per candle, positive is net buying
    const flow = [-1, -7, -4, -1, -1, 0.6, -2, -5, -3, -3, -3, -2, -3, -2, -3, -3, -2,
        0.7, 0.7, 0.7, -0.7, 0.7, 11, -14, -11, -2, 3, -2, -10, 0.7, -0.7, -4, -3, 2, -15,
        5, -3, -3, 0, -2, 2, -2, -2, 0.8, -3, 0.7, 0.8, 27, 11, -56];
    [245.5, 461].forEach(x => line(svg, x, 1183, x, 1266, GRID));
    flow.forEach((v, i) => {
        if (!v) return;
        const dim = Math.abs(v) < 1;
        add(svg, 'rect', {
            x: barX(i) - 4.5,
            y: v > 0 ? base - v : base,
            width: 9,
            height: Math.abs(v),
            fill: v > 0 ? (dim ? '#7a2328' : '#ee3333') : (dim ? '#1d6a32' : '#20a83c')
        });
    });
}

function drawKdj() {
    const svg = document.getElementById('kdj-plot');
    // raw values are in 3x crop units, y = 1140 + v / 3
    const toPoints = arr => arr.map((v, i) => [barX(i), 1140 + v / 3]);
    const j = [605, 668, 693, 691, 680, 652, 651, 677, 686, 692, 696, 668, 635, 605, 581, 590, 547, 497, 473, 472, 475, 464, 471, 471, 503, 522, 488, 477, 510, 511, 530, 592, 630, 648, 698, 695, 677, 680, 683, 698, 666, 654, 674, 643, 650, 657, 638, 512, 454, 462];
    const k = [588, 620, 635, 643, 645, 636, 637, 650, 660, 667, 672, 655, 645, 620, 619, 617, 597, 567, 547, 537, 530, 516, 512, 506, 516, 522, 508, 499, 510, 510, 520, 550, 570, 585, 610, 625, 630, 632, 640, 658, 650, 647, 656, 647, 649, 652, 640, 590, 552, 542];
    const d = [577, 592, 607, 618, 626, 629, 632, 639, 647, 654, 659, 660, 653, 646, 638, 632, 620, 600, 582, 567, 554, 541, 530, 523, 520, 517, 513, 510, 511, 511, 514, 526, 540, 555, 575, 593, 605, 613, 622, 636, 640, 643, 645, 646, 647, 648, 645, 628, 604, 582];
    [245.5, 461].forEach(x => line(svg, x, 1291, x, 1373, GRID));
    polyline(svg, toPoints(d), '#e6e600', 2);
    polyline(svg, toPoints(k), '#eceef2', 2);
    polyline(svg, toPoints(j), '#d010d8', 2);
}

function drawVolume() {
    const svg = document.getElementById('vol-plot');
    // bar tops in crop units, y = 1400 + v / 3
    const tops = [218, 208, 220, 228, 228, 215, 227, 227, 227, 232, 227, 230, 229, 230, 230, 230, 230, 232, 232, 232, 230, 228, 175, 172, 205, 222, 200, 168, 176, 164, 204, 205, 222, 217, 142, 180, 206, 206, 210, 215, 198, 212, 216, 222, 212, 220, 220, 217, 172, -6];
    const colors = 'rggrrrgggggg' + 'rrggrrgrrr' + 'rrgg' + 'rrgrggrg' + 'grrggg' + 'rrgrgrrrr' + 'g';
    [245.5, 461].forEach(x => line(svg, x, 1398, x, 1481, GRID));
    tops.forEach((top, i) => {
        const y = 1400 + top / 3;
        add(svg, 'rect', {
            x: barX(i) - 4.5,
            y,
            width: 9,
            height: 1481 - y,
            fill: colors[i] === 'r' ? RED : GREEN
        });
    });
    const toPoints = arr => arr.map(p => [p[0] * 0.49, 1400 + p[1] / 3]);
    polyline(svg, toPoints([[18, 212], [130, 210], [260, 210], [340, 222], [480, 228], [560, 218], [660, 212], [760, 204], [900, 195], [1000, 200], [1060, 204], [1080, 200], [1096, 188]]), '#1a80c0', 1.6);
    polyline(svg, toPoints([[18, 210], [80, 216], [130, 222], [240, 226], [400, 230], [490, 225], [530, 203], [600, 193], [660, 185], [700, 185], [740, 200], [790, 185], [860, 188], [880, 205], [950, 209], [1010, 212], [1060, 212], [1080, 195], [1096, 165]]), '#c0307a', 1.6);
    polyline(svg, toPoints([[18, 195], [40, 196], [80, 207], [130, 218], [200, 222], [300, 228], [420, 230], [490, 228], [530, 218], [580, 216], [640, 203], [690, 187], [740, 197], [780, 187], [850, 195], [920, 200], [1000, 210], [1060, 214], [1080, 210], [1096, 185]]), '#d8a020', 1.6);
}

function drawChips() {
    const svg = document.getElementById('chip-plot');
    const defs = add(svg, 'defs', {});
    const stripes = add(defs, 'pattern', { id: 'chip-stripes', width: 4, height: 2.5, patternUnits: 'userSpaceOnUse' });
    add(stripes, 'rect', { width: 4, height: 0.7, fill: '#000', 'fill-opacity': 0.22 });

    line(svg, 556, 684, 556, 1133, GRID);
    line(svg, 660, 684, 660, 1133, GRID);
    line(svg, 763, 684, 763, 1133, GRID);
    line(svg, 556, 684, 763, 684, GRID);
    line(svg, 556, 708, 763, 708, GRID);
    line(svg, 556, 1133, 763, 1133, GRID);

    const green = '556,725 632,775 603,794 556,794';
    const red = '556,794 603,794 563,824 571,840 580,842 631,858 577,877 573,880 567,890 580,900 587,905 583,918 593,930 587,943 580,952 580,957 593,970 612,980 608,987 609,1003 632,1016 616,1023 618,1027 631,1033 613,1041 587,1048 568,1053 560,1060 557,1073 556,1076';
    add(svg, 'polygon', { points: green, fill: '#27a03b' });
    add(svg, 'polygon', { points: red, fill: '#cb3136' });
    add(svg, 'polygon', { points: green, fill: 'url(#chip-stripes)' });
    add(svg, 'polygon', { points: red, fill: 'url(#chip-stripes)' });

    line(svg, 590, 945.7, 763, 945.7, '#b52a2e', { 'stroke-width': 1.6 });
    line(svg, 556, 914, 763, 914, '#2a5ea8', { 'stroke-width': 1.4, 'stroke-dasharray': '5 3' });

    add(svg, 'rect', { x: 713, y: 887, width: 50, height: 27, fill: '#23507f' });
    label(svg, 738, 907, '10.26', 18, '#f3f4f6', 'middle');
    label(svg, 759, 730, '12.06', 18, '#5f6879', 'end');
    label(svg, 759, 1125.5, '8.34', 18, '#5f6879', 'end');
}

drawMain();
drawFlow();
drawKdj();
drawVolume();
drawChips();
```
